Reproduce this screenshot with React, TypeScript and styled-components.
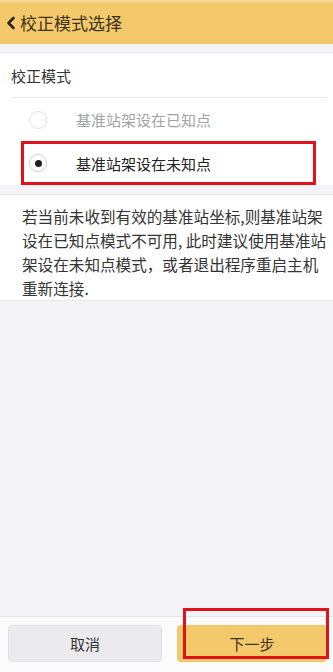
import React from "react";
import styled, { createGlobalStyle } from "styled-components";

const Global = createGlobalStyle`
  html, body { margin: 0; padding: 0; background: #f4f3f7; }
  body { font-family: "Noto Sans CJK SC", "Noto Sans", sans-serif; }
  * { box-sizing: border-box; }
`;

const Page = styled.div`
  position: relative;
  display: flex;
  flex-direction: column;
  width: 333px;
  height: 672px;
  background: #f4f3f7;
  overflow: hidden;
`;

const Header = styled.div`
  height: 44px;
  flex: none;
  display: flex;
  align-items: center;
  gap: 4px;
  padding-left: 6px;
  background: #f4c96b;
  border-top: 3px solid #f7d88f;
  border-bottom: 1px solid #efc364;
`;

const Title = styled.div`
  font-size: 17px;
  color: #3b3320;
  line-height: 1;
  margin-top: -1px;
`;

const Spacer = styled.div<{ h: number }>`
  height: ${(p) => p.h}px;
  flex: none;
  background: #f4f3f7;
  border-bottom: 1px solid #e7e6eb;
`;

const Section = styled.div`
  background: #fff;
  flex: none;
`;

const SectionTitle = styled.div`
  height: 45px;
  display: flex;
  align-items: center;
  margin: 0 6px 0 11px;
  border-bottom: 1px solid #e9e9ec;
  font-size: 15px;
  color: #333;
`;

const Row = styled.div<{ marked?: boolean }>`
  height: ${(p) => (p.marked ? 44 : 43)}px;
  display: flex;
  align-items: center;
  margin: 0 17px 0 21px;
  padding-left: ${(p) => (p.marked ? 5 : 8)}px;
  border: ${(p) => (p.marked ? "3px solid #e2121b" : "none")};
`;

const Radio = styled.div<{ checked?: boolean }>`
  width: 18px;
  height: 18px;
  border-radius: 50%;
  border: 1px solid ${(p) => (p.checked ? "#d5d5d8" : "#e1e1e4")};
  box-shadow: ${(p) => (p.checked ? "0 0 1px rgba(0,0,0,0.15)" : "none")};
  display: flex;
  align-items: center;
  justify-content: center;
  flex: none;
  &::after {
    content: "";
    display: ${(p) => (p.checked ? "block" : "none")};
    width: 7px;
    height: 7px;
    border-radius: 50%;
    background: #1e1e1e;
  }
`;

const RowLabel = styled.div<{ muted?: boolean }>`
  margin-left: 29px;
  font-size: 15px;
  color: ${(p) => (p.muted ? "#a2a2a6" : "#222")};
`;

const Note = styled.div`
  background: #fff;
  flex: none;
  padding: 9px 8px 0 22px;
  border-bottom: 1px solid #e9e9ec;
  font-size: 15.6px;
  line-height: 24px;
  color: #333;
`;

const Line = styled.span`
  display: block;
  white-space: nowrap;
`;

const Filler = styled.div`
  flex: 1;
`;

const Footer = styled.div`
  flex: none;
  display: flex;
  gap: 15px;
  padding: 8px 6px 10px 8px;
  background: #fbfbfc;
  border-top: 1px solid #e3e3e7;
`;

const Button = styled.div<{ primary?: boolean; w: number }>`
  width: ${(p) => p.w}px;
  height: 37px;
  border-radius: 4px;
  display: flex;
  align-items: center;
  justify-content: center;
  font-size: 15px;
  color: ${(p) => (p.primary ? "#3b3320" : "#333")};
  background: ${(p) => (p.primary ? "#f4c96b" : "#ebebee")};
  border: 1px solid ${(p) => (p.primary ? "#f1c262" : "#e2e2e6")};
`;

const Marker = styled.div`
  position: absolute;
  left: 183px;
  top: 608px;
  width: 146px;
  height: 51px;
  border: 3px solid #e2121b;
  pointer-events: none;
`;

export default function App() {
  return (
    <>
      <Global />
      <Page>
        <Header>
          <svg width="10" height="14" viewBox="0 0 10 14">
            <path d="M7.5 2 L2.5 7 L7.5 12" fill="none" stroke="#2a2414" strokeWidth="2.6" strokeLinecap="round" strokeLinejoin="round" />
          </svg>
          <Title>校正模式选择</Title>
        </Header>
        <Spacer h={9} />
        <Section>
          <SectionTitle>校正模式</SectionTitle>
          <Row>
            <Radio />
            <RowLabel muted>基准站架设在已知点</RowLabel>
          </Row>
          <Row marked>
            <Radio checked />
            <RowLabel>基准站架设在未知点</RowLabel>
          </Row>
        </Section>
        <Spacer h={10} />
        <Note>
          <Line>若当前未收到有效的基准站坐标,则基准站架</Line>
          <Line>设在已知点模式不可用, 此时建议使用基准站</Line>
          <Line>架设在未知点模式，或者退出程序重启主机</Line>
          <Line>重新连接.</Line>
        </Note>
        <Filler />
        <Footer>
          <Button w={154}>取消</Button>
          <Button primary w={150}>下一步</Button>
        </Footer>
        <Marker />
      </Page>
    </>
  );
}
